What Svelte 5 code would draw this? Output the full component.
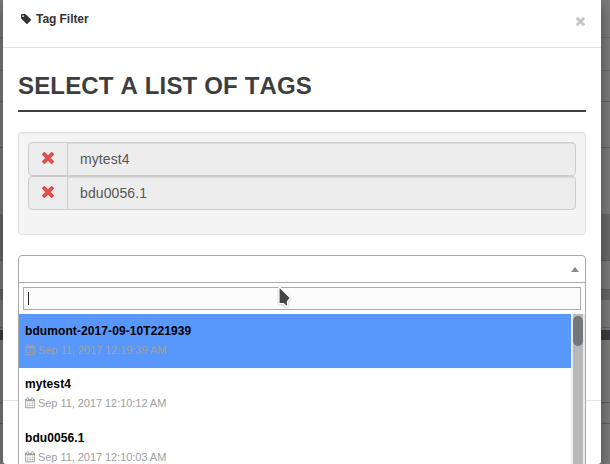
<script>
  const selected = ['mytest4', 'bdu0056.1'];
  const options = [
    { name: 'bdumont-2017-09-10T221939', date: 'Sep 11, 2017 12:19:39 AM', active: true },
    { name: 'mytest4', date: 'Sep 11, 2017 12:10:12 AM' },
    { name: 'bdu0056.1', date: 'Sep 11, 2017 12:10:03 AM' }
  ];
</script>

{#snippet cross()}
  <svg class="cross" viewBox="302 302 1188 1188"><path d="M1490 1322q0 40-28 68l-136 136q-28 28-68 28t-68-28l-294-294-294 294q-28 28-68 28t-68-28l-136-136q-28-28-28-68t28-68l294-294-294-294q-28-28-28-68t28-68l136-136q28-28 68-28t68 28l294 294 294-294q28-28 68-28t68 28l136 136q28 28 28 68t-28 68l-294 294 294 294q28 28 28 68z" transform="translate(0 -64)" /></svg>
{/snippet}

<div class="page">
  <div class="modal">
    <header>
      <svg class="tag" viewBox="128 128 1515 1515"><path d="M576 448q0-53-37.5-90.5t-90.5-37.5-90.5 37.5-37.5 90.5 37.5 90.5 90.5 37.5 90.5-37.5 37.5-90.5zm1067 576q0 53-37 90l-491 492q-39 37-91 37-53 0-90-37l-715-716q-38-37-64.500-101t-26.500-117v-416q0-52 38-90t90-38h416q53 0 117 26.500t102 64.500l715 714q37 39 37 91z" /></svg>
      <span class="title">Tag Filter</span>
      <button class="close" aria-label="Close">{@render cross()}</button>
    </header>
    <main>
      <h1>SELECT A LIST OF TAGS</h1>
      <div class="well">
        {#each selected as tag}
          <div class="group">
            <span class="addon">{@render cross()}</span>
            <span class="value">{tag}</span>
          </div>
        {/each}
      </div>
      <div class="select">
        <div class="choice"><span class="arrow"></span></div>
        <div class="search"><span class="caret"></span></div>
        <div class="results">
          <div class="list">
            {#each options as o}
              <div class="option" class:active={o.active}>
                <div class="name">{o.name}</div>
                <div class="date">
                  <svg class="cal" viewBox="64 0 1664 1792"><path d="M192 1664h288v-288h-288v288zm352 0h320v-288h-320v288zm-352-352h288v-320h-288v320zm352 0h320v-320h-320v320zm-352-384h288v-288h-288v288zm736 736h320v-288h-320v288zm-384-736h320v-288h-320v288zm768 736h288v-288h-288v288zm-384-352h320v-320h-320v320zm-352-864v-288q0-13-9.5-22.5t-22.5-9.5h-64q-13 0-22.5 9.5t-9.5 22.5v288q0 13 9.5 22.5t22.5 9.5h64q13 0 22.5-9.5t9.5-22.5zm736 864h288v-320h-288v320zm-384-384h320v-288h-320v288zm384 0h288v-288h-288v288zm32-480v-288q0-13-9.5-22.5t-22.5-9.5h-64q-13 0-22.5 9.5t-9.5 22.5v288q0 13 9.5 22.5t22.5 9.5h64q13 0 22.5-9.5t9.5-22.5zm384-64v1280q0 52-38 90t-90 38h-1408q-52 0-90-38t-38-90v-1280q0-52 38-90t90-38h128v-96q0-66 47-113t113-47h64q66 0 113 47t47 113v96h384v-96q0-66 47-113t113-47h64q66 0 113 47t47 113v96h128q52 0 90 38t38 90z" /></svg>
                  <span>{o.date}</span>
                </div>
              </div>
            {/each}
          </div>
          <div class="scroll"><div class="thumb"></div></div>
        </div>
      </div>
    </main>
    <div class="footline"></div>
  </div>
  <svg class="pointer" width="18" height="24" viewBox="0 0 18 24"><path d="M2 1.5V18.500H6.500L9.500 21.500H10.500V16.500L13.500 13Z" fill="#444" stroke="#fff" stroke-width="1.200" /></svg>
</div>

<style>
  .page {
    position: relative;
    box-sizing: border-box;
    width: 610px;
    height: 464px;
    overflow: hidden;
    padding: 0 9px 0 3px;
    font-family: 'Liberation Sans', Arial, sans-serif;
    background:
      linear-gradient(#6c6c6c, #6c6c6c) 0 37px / 100% 1px no-repeat,
      linear-gradient(#6c6c6c, #6c6c6c) 0 70px / 100% 1px no-repeat,
      linear-gradient(#646464, #646464) 0 101px / 100% 1px no-repeat,
      linear-gradient(#646464, #646464) 0 147px / 100% 1px no-repeat,
      linear-gradient(#606060, #606060) 0 260px / 100% 1px no-repeat,
      linear-gradient(#6a6a6a, #6a6a6a) 0 214px / 100% 46px no-repeat,
      linear-gradient(#606060, #606060) 0 289px / 100% 1px no-repeat,
      linear-gradient(#686868, #686868) 0 290px / 100% 10px no-repeat,
      linear-gradient(#646464, #646464) 0 327px / 100% 1px no-repeat,
      linear-gradient(#3c3d40, #3c3d40) 0 330px / 100% 10px no-repeat,
      linear-gradient(#606060, #606060) 0 402px / 100% 1px no-repeat,
      linear-gradient(#606060, #606060) 0 423px / 100% 1px no-repeat,
      #7c7c7c;
  }
  .modal {
    position: relative;
    height: 464px;
    background: #fff;
    border-radius: 0 0 3px 3px;
    box-shadow: 0 5px 15px rgba(0, 0, 0, 0.42);
  }
  header {
    display: flex;
    box-sizing: border-box;
    height: 48px;
    padding: 0 16.5px 0 18px;
    border-bottom: 1px solid #e3e3e3;
  }
  svg { display: block; overflow: visible; }
  .tag { width: 10px; height: 10px; margin-top: 14px; fill: #333; }
  .title { margin: 11px 0 0 5px; font: bold 12px/16px 'Liberation Sans', sans-serif; letter-spacing: -0.05px; color: #333; }
  .close { margin: 16.5px 0 0 auto; padding: 0; border: 0; background: none; height: 9px; }
  .close .cross { width: 9px; height: 9px; fill: #c6c6c6; }
  main { padding: 23px 15px 0; }
  h1 {
    box-sizing: border-box;
    height: 41px;
    margin: 0 0 20px;
    border-bottom: 2px solid #3e3e40;
    font-size: 24px;
    line-height: 29px;
    letter-spacing: 0.16px;
    font-kerning: none;
    color: #3e3e40;
    white-space: nowrap;
  }
  .well {
    box-sizing: border-box;
    height: 103px;
    padding: 9px;
    background: #f4f4f4;
    border: 1px solid #e3e3e3;
    border-radius: 3px;
    box-shadow: inset 0 1px 1px rgba(0, 0, 0, 0.05);
  }
  .group {
    display: flex;
    box-sizing: border-box;
    height: 34px;
    border: 1px solid #ccc;
    border-radius: 4px;
    background: #ededed;
    overflow: hidden;
  }
  .addon { box-sizing: border-box; width: 39px; display: flex; justify-content: center; padding-top: 9px; border-right: 1px solid #ccc; }
  .addon .cross { width: 12px; height: 12px; fill: #dc514d; }
  .value { flex: 1; padding-left: 12px; font-size: 14px; line-height: 32px; letter-spacing: 0.1px; color: #555; box-shadow: inset 0 1px 1px rgba(0, 0, 0, 0.075); }
  .select {
    box-sizing: border-box;
    height: 220px;
    margin-top: 20px;
    border: 1px solid #aaa;
    border-radius: 4px 4px 0 0;
    background: #fff;
    position: relative;
    z-index: 1;
  }
  .choice { display: flex; justify-content: flex-end; height: 26px; border-bottom: 1px solid #aaa; }
  .arrow { width: 0; height: 0; margin: 11px 6px 0 0; border: 4px solid transparent; border-top: 0; border-bottom: 5px solid #888; }
  .search { box-sizing: border-box; height: 23px; margin: 4px; border: 1px solid #aaa; background: #fcfcfc; }
  .caret { display: block; width: 1px; height: 13px; margin: 4px 0 0 4px; background: #222; }
  .results { display: flex; height: 160px; }
  .list { flex: 1; }
  .option { box-sizing: border-box; height: 53.5px; padding: 7.8px 6px 0; }
  .active { background: #5897fb; }
  .name { font: bold 12px/18px 'Liberation Sans', sans-serif; letter-spacing: 0.09px; color: #000; }
  .date { display: flex; gap: 3px; padding-top: 3px; font-size: 11px; line-height: 15px; letter-spacing: -0.05px; color: #a0a0a0; }
  .cal { width: 10px; height: 11.5px; margin-top: 1px; fill: #a0a0a0; }
  .scroll { box-sizing: border-box; width: 14px; padding: 2px 2px 0; background: linear-gradient(90deg, #ededed 2px, #b6b8b9 2px 12px, #ededed 12px); }
  .thumb { height: 30px; border-radius: 5px; background: #73777c; }
  .footline { position: absolute; left: 0; right: 0; top: 400px; height: 1px; background: #e5e5e5; }
  .pointer { position: absolute; left: 277px; top: 285px; z-index: 2; filter: drop-shadow(0 1px 1px rgba(0, 0, 0, 0.2)); }
</style>
